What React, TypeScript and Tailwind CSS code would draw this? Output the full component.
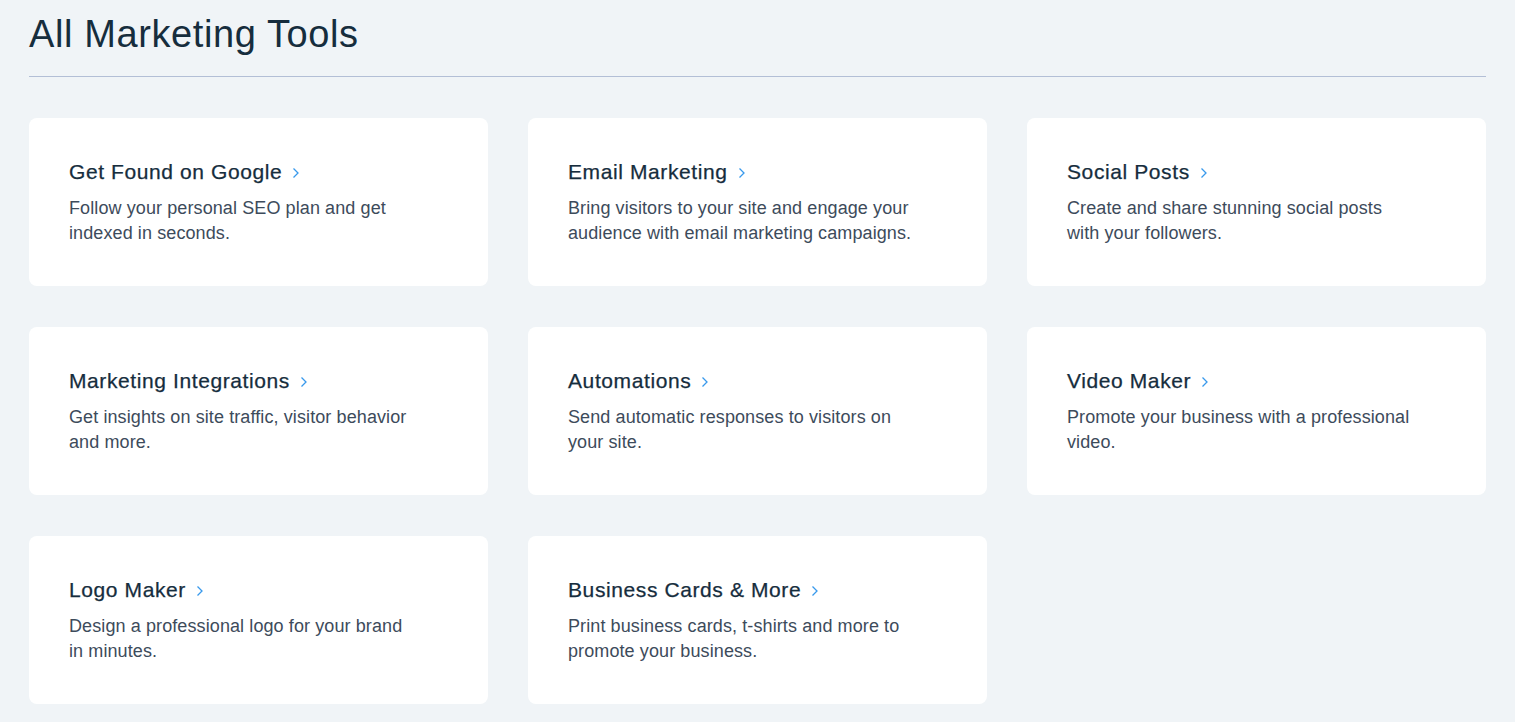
import React from 'react';

type Tool = {
  title: string;
  lines: string[];
};

const tools: Tool[] = [
  { title: 'Get Found on Google', lines: ['Follow your personal SEO plan and get', 'indexed in seconds.'] },
  { title: 'Email Marketing', lines: ['Bring visitors to your site and engage your', 'audience with email marketing campaigns.'] },
  { title: 'Social Posts', lines: ['Create and share stunning social posts', 'with your followers.'] },
  { title: 'Marketing Integrations', lines: ['Get insights on site traffic, visitor behavior', 'and more.'] },
  { title: 'Automations', lines: ['Send automatic responses to visitors on', 'your site.'] },
  { title: 'Video Maker', lines: ['Promote your business with a professional', 'video.'] },
  { title: 'Logo Maker', lines: ['Design a professional logo for your brand', 'in minutes.'] },
  { title: 'Business Cards & More', lines: ['Print business cards, t-shirts and more to', 'promote your business.'] },
];

const Chevron = () => (
  <svg width="8" height="12" viewBox="0 0 8 12" fill="none" className="ml-[10px] mt-[2px]">
    <path d="M1.5 1.5L6 6l-4.5 4.5" stroke="#3899ec" strokeWidth="1.3" />
  </svg>
);

const ToolCard = ({ tool }: { tool: Tool }) => (
  <a href="#" className="block h-[168px] rounded-lg bg-white pl-10 pt-[41px]">
    <div className="flex items-center">
      <span className="text-[21px] leading-[26px] tracking-[0.6px] text-[#162d3d] [-webkit-text-stroke:0.25px_#162d3d]">
        {tool.title}
      </span>
      <Chevron />
    </div>
    <p className="mt-[11px] text-[18px] leading-[25px] tracking-[0.1px] text-[#3d4b5b]">
      {tool.lines.map((line, i) => (
        <span key={i} className="block whitespace-nowrap">{line}</span>
      ))}
    </p>
  </a>
);

export default function App() {
  return (
    <div
      className="min-h-screen bg-[#f0f4f7] px-[29px] pt-[12px] pb-10"
      style={{ fontFamily: '"Liberation Sans", Arial, sans-serif' }}
    >
      <h1 className="text-[38px] leading-[44px] tracking-[0.6px] text-[#162d3d]">All Marketing Tools</h1>
      <div className="mt-[20px] h-px bg-[#b3bfd6]" />
      <div className="mt-[41px] grid grid-cols-3 gap-x-[40px] gap-y-[41px]">
        {tools.map((t) => (
          <ToolCard key={t.title} tool={t} />
        ))}
      </div>
    </div>
  );
}
